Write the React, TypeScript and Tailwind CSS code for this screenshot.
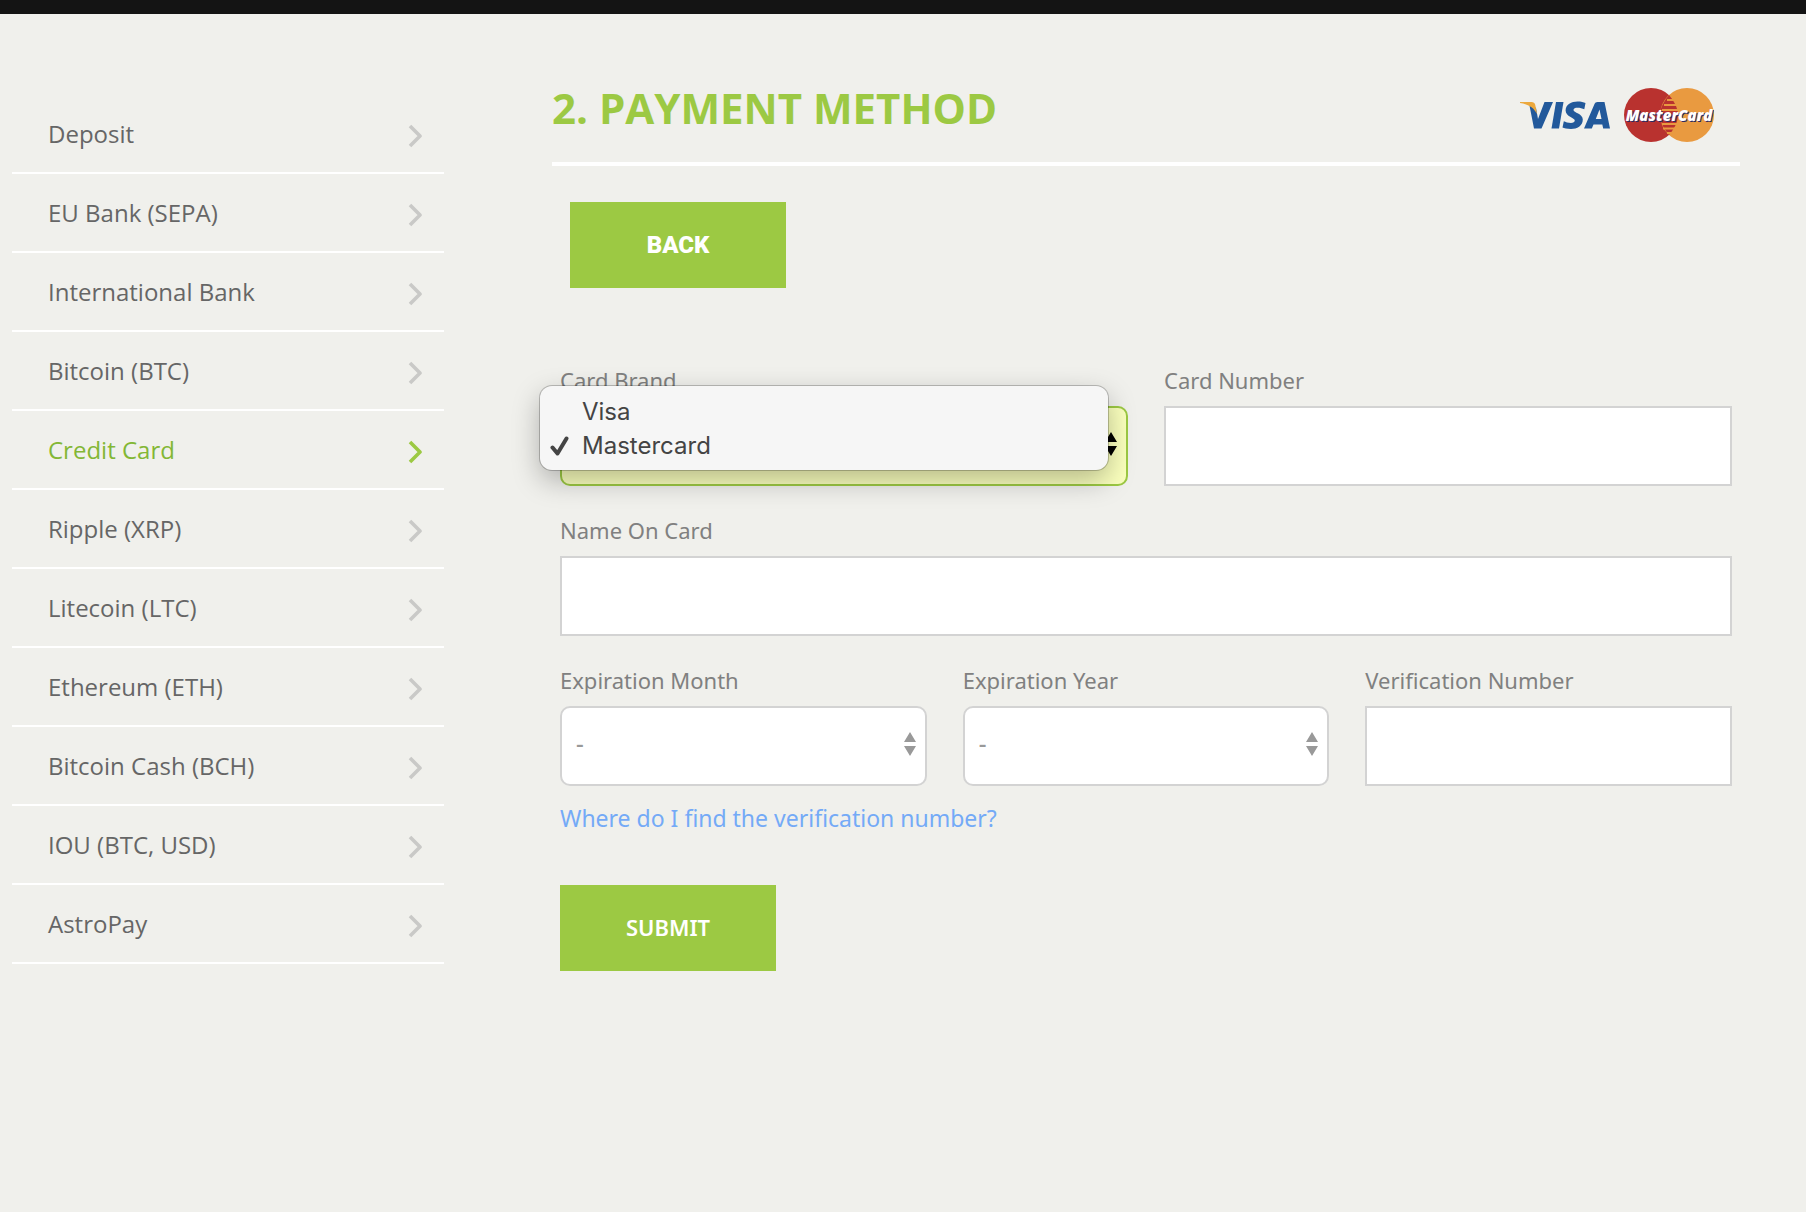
import clsx from "clsx";
import type { ReactNode } from "react";

const methods = [
  "Deposit",
  "EU Bank (SEPA)",
  "International Bank",
  "Bitcoin (BTC)",
  "Credit Card",
  "Ripple (XRP)",
  "Litecoin (LTC)",
  "Ethereum (ETH)",
  "Bitcoin Cash (BCH)",
  "IOU (BTC, USD)",
  "AstroPay",
];

const months = ["-", "01", "02", "03", "04", "05", "06", "07", "08", "09", "10", "11", "12"];
const years = ["-", "2018", "2019", "2020", "2021", "2022", "2023", "2024"];

function Chevron() {
  return (
    <svg width="14" height="24" viewBox="0 0 14 24" fill="none" aria-hidden="true">
      <path d="M2 2 L12 12 L2 22" stroke="currentColor" strokeWidth="3.6" strokeLinejoin="round" />
    </svg>
  );
}

function Sidebar({ active }: { active: string }) {
  return (
    <nav aria-label="Payment methods" className="w-[432px] shrink-0 pt-[81px]">
      <ul>
        {methods.map((name) => (
          <li key={name} className="border-b-2 border-white">
            <a
              href="#"
              aria-current={name === active ? "page" : undefined}
              className={clsx(
                "flex h-[77px] items-center justify-between pl-9 pr-[22px] text-2xl",
                name === active ? "text-[#83b735]" : "text-[#666666]"
              )}
            >
              {name}
              <span className={clsx("pt-1", name === active ? "text-[#9cc943]" : "text-[#c9c9c7]")}>
                <Chevron />
              </span>
            </a>
          </li>
        ))}
      </ul>
    </nav>
  );
}

function CardLogos() {
  return (
    <svg width="194" height="54" viewBox="0 0 194 54" role="img" aria-label="Visa and MasterCard">
      <g fill="#22599b">
        <path d="M9 15 L14 40.500 H21.500 L33 14 H24.500 L18 31 L16 20 Z" />
        <path d="M36 14 H43.500 L39 40.500 H31.500 Z" />
        <path d="M65.500 15 L64.300 21.300 C61 19.700 53.500 18.800 53.500 22 C53.500 24.800 62.800 25.500 62.800 31.500 C62.800 38 57 41 51 41 C47 41 44 40.300 42.500 39.600 L43.800 33.300 C46.500 34.800 54.800 36.500 54.800 32.600 C54.800 29.700 45.600 28.800 45.600 22.500 C45.600 16.500 51.500 13.500 57.500 13.500 C61 13.500 63.800 14.200 65.500 15 Z" />
        <path fillRule="evenodd" d="M77.500 14 H84.500 L90 40.500 H83.200 L82.300 36.500 H73.500 L71.800 40.500 H64 L74.500 16 C75 14.800 76 14 77.500 14 Z M79.500 21.500 L75.800 31 H81.500 Z" />
      </g>
      <path d="M0 14 H11.500 C13.500 14 14.700 14.800 15.200 16.700 L17 26 C13.500 19 7 16 0 15 Z" fill="#eca83c" />
      <circle cx="131" cy="27" r="27" fill="#b9322f" />
      <circle cx="167" cy="27" r="27" fill="#e99a40" />
      <path
        d="M149 7 C145 12 140 19 140 27 C140 35 145 42 149 47 C153 42 158 35 158 27 C158 19 153 12 149 7 Z"
        fill="#b9322f"
      />
      <path
        d="M147 12 H156 M144 17 H158 M142 22 H158 M142 36 H158 M143 40.500 H157 M147 45 H154"
        stroke="#e99a40"
        strokeWidth="2.200"
      />
      <g
        className="font-['Open_Sans',sans-serif] text-[15px] font-extrabold italic"
        textAnchor="middle"
      >
        <text x="150" y="34" fill="#2b2a63">MasterCard</text>
        <text x="149" y="33" fill="#ffffff">MasterCard</text>
      </g>
    </svg>
  );
}

function Field({ id, label, children }: { id: string; label: string; children: ReactNode }) {
  return (
    <div>
      <label htmlFor={id} className="block h-[50px] pt-2 text-[22px] leading-8 text-[#808080]">
        {label}
      </label>
      {children}
    </div>
  );
}

function TextInput({ id }: { id: string }) {
  return (
    <input
      id={id}
      type="text"
      className="block h-20 w-full border-2 border-[#d3d3d3] bg-white px-4 text-2xl text-[#999999] outline-none"
    />
  );
}

type SelectProps = {
  id: string;
  options: string[];
  defaultValue?: string;
  open?: boolean;
};

function Select({ id, options, defaultValue, open = false }: SelectProps) {
  return (
    <div className={clsx("relative", open ? "text-black" : "text-[#999999]")}>
      <select
        id={id}
        defaultValue={defaultValue}
        className={clsx(
          "block h-20 w-full appearance-none rounded-[10px] border-2 px-3.5 pb-1.5 text-2xl outline-none",
          open ? "border-[#9cc943] bg-[#faffbd]" : "border-[#d3d3d3] bg-white font-medium"
        )}
      >
        {options.map((option) => (
          <option key={option}>{option}</option>
        ))}
      </select>
      <svg
        width="12"
        height="24"
        viewBox="0 0 12 24"
        fill="currentColor"
        aria-hidden="true"
        className="pointer-events-none absolute right-[11px] top-[26px]"
      >
        <path d="M6 0 L12 10 H0 Z M0 14 H12 L6 24 Z" />
      </svg>
      {open && (
        <ul
          role="listbox"
          aria-label="Card Brand"
          className="absolute -left-5 -top-5 w-full rounded-xl bg-[#f6f6f6] pb-[7px] pt-[9px] font-[Inter,sans-serif] text-2xl text-[#444444] shadow-[0_0_0_1px_rgba(0,0,0,0.22),0_10px_28px_rgba(0,0,0,0.28)]"
        >
          {options.map((option) => (
            <li
              key={option}
              role="option"
              aria-selected={option === defaultValue}
              className="flex h-[34px] items-center pl-2.5"
            >
              <span className="w-8">
                {option === defaultValue && (
                  <svg width="19" height="22" viewBox="0 0 19 22" fill="none" aria-hidden="true">
                    <path
                      d="M2.500 12.500 L7.500 18.500 L16.500 3.500"
                      stroke="currentColor"
                      strokeWidth="4"
                      strokeLinecap="round"
                      strokeLinejoin="round"
                    />
                  </svg>
                )}
              </span>
              {option}
            </li>
          ))}
        </ul>
      )}
    </div>
  );
}

export default function App() {
  return (
    <div className="min-h-screen bg-[#f0f0ec] font-['Open_Sans',sans-serif]">
      <div className="h-3.5 bg-[#141414]" />
      <div className="flex pl-3">
        <Sidebar active="Credit Card" />

        <main className="ml-[108px] mr-[66px] flex-1 pt-[60px]">
          <header className="flex h-[92px] items-start justify-between border-b-4 border-white pr-[26px]">
            <h1 className="pt-2 text-[42px] font-bold leading-[52px] text-[#9cc943]">
              2. PAYMENT METHOD
            </h1>
            <div className="pt-3.5">
              <CardLogos />
            </div>
          </header>

          <button
            type="button"
            className="ml-[18px] mt-9 block h-[86px] w-[216px] bg-[#9cc943] font-[Roboto,sans-serif] text-2xl font-black text-white"
          >
            BACK
          </button>

          <form className="px-2 pt-[68px] font-['Noto_Sans',sans-serif]">
            <div className="grid grid-cols-2 gap-x-9">
              <Field id="brand" label="Card Brand">
                <Select id="brand" options={["Visa", "Mastercard"]} defaultValue="Mastercard" open />
              </Field>
              <Field id="number" label="Card Number">
                <TextInput id="number" />
              </Field>
            </div>
            <div className="pt-5">
              <Field id="name" label="Name On Card">
                <TextInput id="name" />
              </Field>
            </div>
            <div className="grid grid-cols-3 gap-x-9 pt-5">
              <Field id="month" label="Expiration Month">
                <Select id="month" options={months} />
              </Field>
              <Field id="year" label="Expiration Year">
                <Select id="year" options={years} />
              </Field>
              <Field id="cvv" label="Verification Number">
                <TextInput id="cvv" />
              </Field>
            </div>
            <a href="#" className="mt-4 inline-block text-[23px] leading-8 text-[#74aaf7]">
              Where do I find the verification number?
            </a>
            <button
              type="submit"
              className="mt-[51px] block h-[86px] w-[216px] bg-[#9cc943] pb-0.5 text-[22px] font-semibold text-white"
            >
              SUBMIT
            </button>
          </form>
        </main>
      </div>
    </div>
  );
}
